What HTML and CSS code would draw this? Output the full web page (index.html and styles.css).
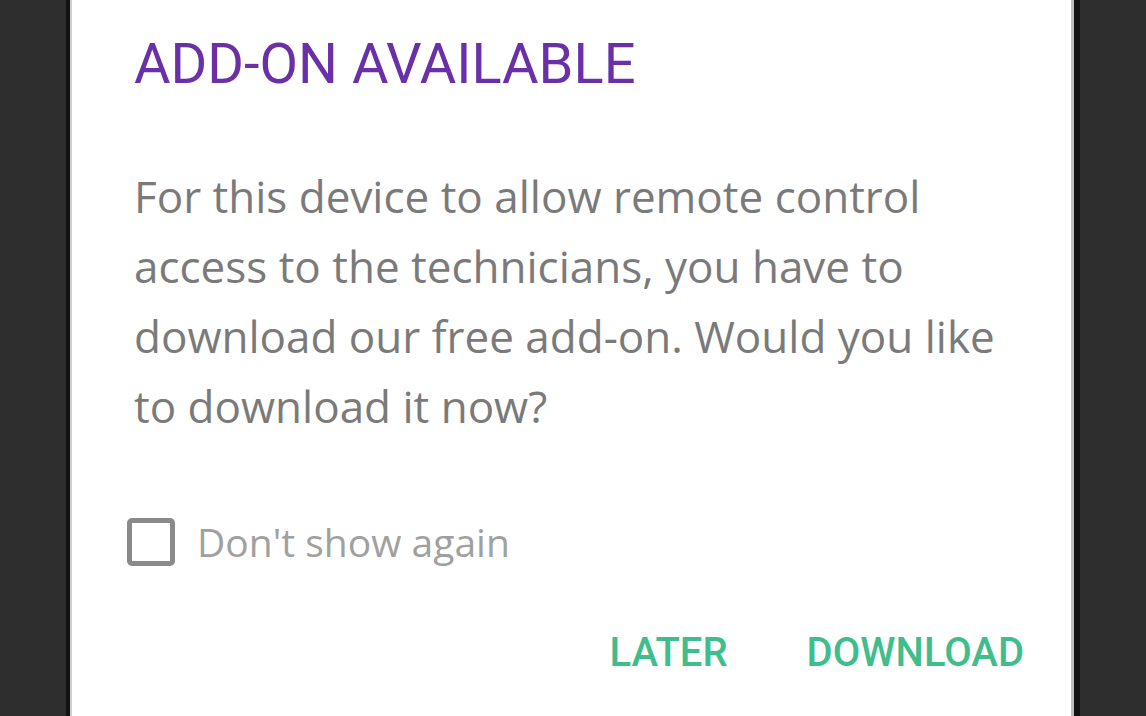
FILE: index.html
```html
<!DOCTYPE html>
<html>
<head>
<meta charset="utf-8">
<link rel="stylesheet" href="styles.css">
</head>
<body>
<div class="frame">
  <div class="dialog">
    <h1 class="title">ADD-ON AVAILABLE</h1>
    <p class="message">For this device to allow remote control access to the technicians, you have to download our free add-on. Would you like to download it now?</p>
    <label class="check-row">
      <span class="checkbox"></span>
      <span class="check-label">Don't show again</span>
    </label>
    <div class="actions">
      <span class="btn">LATER</span>
      <span class="btn">DOWNLOAD</span>
    </div>
  </div>
</div>
</body>
</html>
```

FILE: styles.css
```css
html, body {
  margin: 0;
  padding: 0;
  height: 100%;
  background: #2e2e2e;
  overflow: hidden;
}
.frame {
  margin-left: 66px;
  width: 1014px;
  height: 716px;
  box-sizing: border-box;
  background: #121212;
  padding: 0 6px 0 4px;
  display: flex;
}
.dialog {
  flex: 1;
  background: #fff;
  border-left: 2px solid #cfcfcf;
  border-right: 3px solid #bcbcbc;
  padding: 32px 47px 0 62px;
  display: flex;
  flex-direction: column;
}
.title {
  margin: 0;
  font-family: Roboto, "Liberation Sans", sans-serif;
  font-weight: 400;
  font-size: 56px;
  line-height: 64px;
  color: #6a30a8;
}
.message {
  margin: 65px 0 0;
  font-family: "Open Sans", "Noto Sans", sans-serif;
  font-size: 44px;
  line-height: 70px;
  color: #7a7a7a;
  width: 885px;
}
.check-row {
  display: flex;
  align-items: center;
  gap: 22px;
  margin: 77px 0 0 -7px;
  height: 48px;
}
.checkbox {
  width: 38px;
  height: 38px;
  border: 5px solid #8a8a8a;
  border-radius: 5px;
}
.check-label {
  font-family: "Open Sans", "Noto Sans", sans-serif;
  font-size: 39px;
  line-height: 48px;
  color: #a0a0a0;
}
.actions {
  display: flex;
  justify-content: flex-end;
  gap: 79px;
  margin-top: 63px;
}
.btn {
  font-family: Roboto, "Liberation Sans", sans-serif;
  font-weight: 500;
  font-size: 40px;
  color: #3fbd8c;
}
```
